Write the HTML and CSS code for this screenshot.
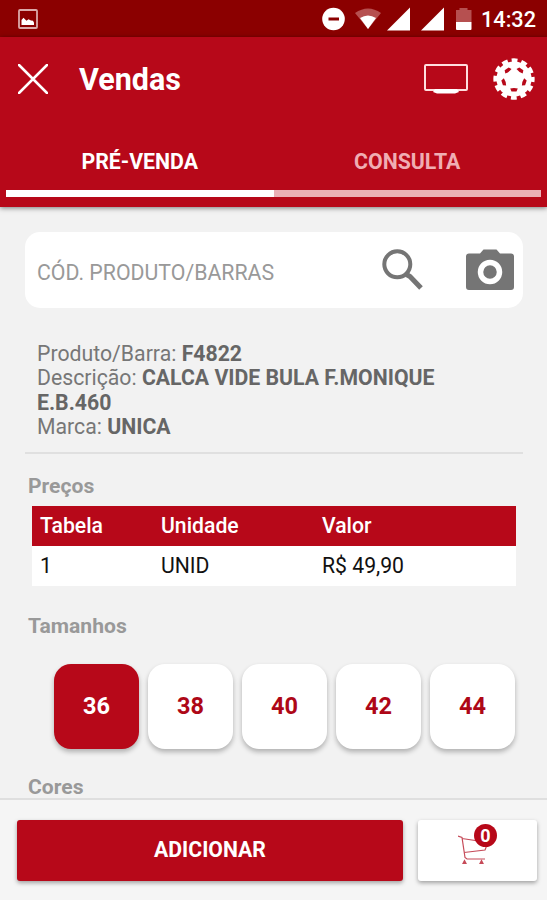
FILE: index.html
```html
<!DOCTYPE html>
<html lang="pt-BR">
<head>
<meta charset="utf-8">
<title>Vendas</title>
<link rel="stylesheet" href="styles.css">
</head>
<body>
<div class="screen">
  <div class="statusbar">
    <svg class="status-picture" width="20" height="20" viewBox="0 0 20 20"><rect x="1" y="1" width="18" height="18" rx="1" fill="none" stroke="#dba9a9" stroke-width="1.8"/><path d="M3.500 16V11l2-2.300 3 3 2-1.500 2.500 1.300 2 .3 1 2V16z" fill="#fff"/></svg>
    <svg class="status-icons" width="152" height="24" viewBox="0 0 152 24">
      <circle cx="11.500" cy="12" r="11.300" fill="#fff"/><rect x="6.500" y="10.500" width="10.500" height="3" fill="#8b0000"/>
      <path d="M33 6Q46-3 59 6L46 22z" fill="#b65050"/><path d="M38 11Q46 6 54 11L46 22z" fill="#fff"/>
      <path d="M65 23.500L88 .5v23zM99 23.500L122 .5v23z" fill="#fff"/>
      <path d="M134 3h3.500V1h8v2h4v12H134z" fill="#b65050"/><path d="M134 15h15.500v7q0 1-1 1H135q-1 0-1-1z" fill="#fff"/>
    </svg>
    <span class="clock">14:32</span>
  </div>
  <header class="header">
    <div class="toolbar">
      <svg class="close" width="30" height="30" viewBox="0 0 30 30"><path d="M1 1L29 29M29 1L1 29" stroke="#fff" stroke-width="2.500" stroke-linecap="round"/></svg>
      <h1 class="title">Vendas</h1>
      <svg class="monitor" width="44" height="30" viewBox="0 0 44 30"><rect x="1" y="1" width="42" height="25" rx="1" fill="none" stroke="#ffdede" stroke-width="2"/><path d="M11 25h22l2 3-4 1.500H13L9 28z" fill="#fff"/></svg>
      <svg class="gear" width="42" height="42" viewBox="-21 -21 42 42">
        <circle r="17.600" fill="#fff"/>
        <circle r="18.400" fill="none" stroke="#fff" stroke-width="4.500" stroke-dasharray="5.800 3.834" stroke-dashoffset="2.900"/>
        <g fill="#b70819">
          <path id="gear-hole" d="M-3.800 9.500Q0 8.300 3.800 9.500L2.500 12.500H-2.500z"/>
          <use href="#gear-hole" transform="rotate(72)"/><use href="#gear-hole" transform="rotate(144)"/><use href="#gear-hole" transform="rotate(216)"/><use href="#gear-hole" transform="rotate(288)"/>
        </g>
      </svg>
    </div>
    <nav class="tabs">
      <div class="tab active">PRÉ-VENDA</div>
      <div class="tab">CONSULTA</div>
    </nav>
  </header>
  <main class="content">
    <div class="search">
      <span class="placeholder">CÓD. PRODUTO/BARRAS</span>
      <svg class="magnifier" width="41" height="41" viewBox="0 0 41 41" fill="none" stroke="#757575"><circle cx="15.300" cy="15.300" r="13" stroke-width="4"/><path d="M24.500 25.500L28 27.500 39 39" stroke-width="5"/></svg>
      <svg class="camera" width="48" height="41" viewBox="0 0 48 41"><path d="M3 4.500H14L17.500.5h13L34 4.500h11q3 0 3 3V38q0 3-3 3H3q-3 0-3-3V7.500q0-3 3-3z" fill="#757575"/><circle cx="24" cy="23" r="9.500" fill="none" stroke="#fff" stroke-width="5.500"/></svg>
    </div>
    <div class="details">
      <div>Produto/Barra: <b>F4822</b></div>
      <div>Descrição: <b>CALCA VIDE BULA F.MONIQUE E.B.460</b></div>
      <div>Marca: <b>UNICA</b></div>
    </div>
    <h2 class="label prices-label">Preços</h2>
    <div class="table">
      <div class="row head"><span>Tabela</span><span>Unidade</span><span>Valor</span></div>
      <div class="row"><span>1</span><span>UNID</span><span>R$ 49,90</span></div>
    </div>
    <h2 class="label sizes-label">Tamanhos</h2>
    <div class="sizes">
      <div class="size selected">36</div><div class="size">38</div><div class="size">40</div><div class="size">42</div><div class="size">44</div>
    </div>
    <h2 class="label colors-label">Cores</h2>
  </main>
  <footer class="footer">
    <div class="add">ADICIONAR</div>
    <div class="cart">
      <svg class="cart-icon" width="34" height="30" viewBox="0 0 34 30" fill="none" stroke="#c64b59" stroke-width="1.200"><path d="M0 1L4 2.500 7 22.500 9 24H27M4 3.500L30 7.500 27 15 6 17.500"/><path d="M6.500 25.500l1.500 3H5zM23.500 25.500l1.500 3h-3z" fill="#c64b59"/></svg>
      <span class="badge">0</span>
    </div>
  </footer>
</div>
</body>
</html>
```
FILE: styles.css
```css
* { box-sizing: border-box; }
body { margin: 0; font-family: Roboto, "Liberation Sans", sans-serif; background: #f2f2f2; }
svg { display: block; flex: none; }
.screen { width: 547px; height: 900px; display: flex; flex-direction: column; overflow: hidden; }
.statusbar { height: 37px; flex: none; background: #8b0000; display: flex; align-items: center; padding: 0 11px 0 18px; }
.status-icons { margin-left: 284px; }
.clock { margin-left: 7px; margin-top: 2px; color: #fff; font-size: 21.7px; line-height: 26px; font-weight: 500; white-space: nowrap; }
.header { height: 170px; flex: none; background: #b70819; box-shadow: 0 1px 5px rgba(0,0,0,.5); position: relative; }
.toolbar { height: 84px; display: flex; align-items: center; padding: 0 12px 0 18px; }
.title { margin: 1px auto 0 31px; color: #fff; font-size: 30.5px; line-height: 36px; font-weight: 700; }
.gear { margin-left: 25px; }
.tabs { height: 76px; margin: 0 6px; display: flex; }
.tab { flex: 1; border-bottom: 7px solid #ebb0b6; color: #f0adb3; font-size: 21.3px; line-height: 26px; font-weight: 700; text-align: center; padding-top: 28px; }
.tab.active { color: #fff; border-color: #fff; }
.content { flex: 1; min-height: 0; padding: 25px 25px 0; }
.search { height: 76px; width: 498px; background: #fff; border-radius: 15px; display: flex; align-items: center; padding: 0 9px 0 12px; }
.placeholder { color: #999; font-size: 21.3px; line-height: 26px; margin: 5px auto 0 0; white-space: nowrap; }
.camera { margin-left: 43px; }
.magnifier, .camera { margin-top: -1px; }
.details { width: 498px; height: 146px; padding: 34px 50px 0 12px; color: #777; font-size: 21.25px; line-height: 24.3px; border-bottom: 2px solid #e0e0e0; }
.details b { color: #666; font-weight: 700; }
.label { margin: 0 0 0 3px; color: #999; font-size: 21.1px; line-height: 26px; font-weight: 700; }
.prices-label { margin-top: 19px; }
.table { width: 484px; margin: 7px 0 0 7px; background: #fff; }
.row { height: 40px; display: grid; grid-template-columns: 121px 161px 1fr; padding: 0 0 1px 8px; align-items: center; font-size: 21.2px; line-height: 26px; color: #111; }
.head { background: #b70819; color: #fff; font-weight: 500; }
.sizes-label { margin-top: 27px; }
.sizes { display: flex; gap: 9px; margin: 25px 0 0 29px; }
.size { width: 85px; height: 85px; flex: none; border-radius: 17px; background: #fff; box-shadow: 0 3px 5px rgba(0,0,0,.27); color: #ae0717; display: flex; align-items: center; justify-content: center; font-size: 23.5px; font-weight: 700; padding-bottom: 2px; }
.selected { background: #b70819; color: #fff; }
.colors-label { margin-top: 25px; }
.footer { height: 102px; flex: none; border-top: 2px solid #dfdfdf; background: #f5f5f5; display: flex; gap: 15px; padding: 20px 10px 0 17px; position: relative; }
.add, .cart { height: 61px; border-radius: 3px; display: flex; align-items: center; justify-content: center; box-shadow: 0 2px 4px rgba(0,0,0,.35); }
.add { width: 386px; background: #b70819; color: #fff; font-size: 21.2px; font-weight: 700; padding-bottom: 3px; }
.cart { width: 119px; background: #fff; position: relative; }
.cart-icon { margin-left: -6px; margin-top: -2px; }
.badge { position: absolute; left: 56px; top: 4px; width: 23px; height: 23px; border-radius: 50%; background: #b70819; color: #fff; font-size: 18px; line-height: 23px; font-weight: 700; text-align: center; }
```
